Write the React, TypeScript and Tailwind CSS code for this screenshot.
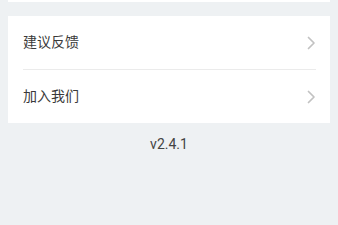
import React from 'react';

const items = ['建议反馈', '加入我们'];

const Chevron = () => (
  <svg width="9" height="14" viewBox="0 0 9 14" fill="none" className="shrink-0">
    <path d="M1.5 1.5L7 7L1.5 12.5" stroke="#c2c2c2" strokeWidth="1.7" strokeLinecap="round" strokeLinejoin="round" />
  </svg>
);

export default function App() {
  return (
    <div
      className="w-[338px] h-[225px] bg-[#eef1f3] overflow-hidden"
      style={{ fontFamily: '"Roboto", "Noto Sans CJK SC", sans-serif' }}
    >
      <div className="mx-2 h-[2px] bg-white" />
      <div className="mx-2 mt-[14px] bg-white pl-[15px] pr-[14px]">
        {items.map((label, i) => (
          <div
            key={label}
            className={`flex items-center justify-between ${i === 0 ? 'h-[54px] border-b border-[#ebebeb]' : 'h-[53px]'}`}
          >
            <span className="text-[14px] text-[#3a3a3a]">{label}</span>
            <Chevron />
          </div>
        ))}
      </div>
      <div className="mt-[11px] text-center text-[14px] text-[#444]">v2.4.1</div>
    </div>
  );
}
